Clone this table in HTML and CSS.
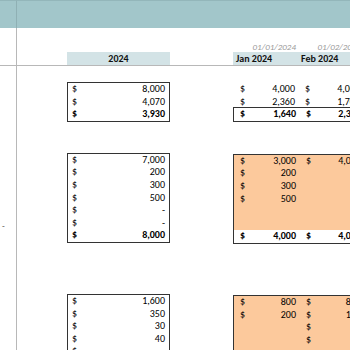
FILE: index.html
```html
<!DOCTYPE html>
<html>
<head>
<meta charset="utf-8">
<link rel="stylesheet" href="styles.css">
</head>
<body>
<div class="sheet">
  <div class="gutter">
    <div class="g-band"></div>
    <div class="g-head"></div>
    <div class="g-body"><span class="dash">-</span></div>
  </div>
  <div class="main">
    <div class="band"></div>
    <div class="head">
      <div class="cols dates">
        <div class="c4 date">01/01/2024</div>
        <div class="c5 date">01/02/2024</div>
      </div>
      <div class="cols titles">
        <div class="c2 title center">2024</div>
        <div class="c4 title">Jan 2024</div>
        <div class="c5 title">Feb 2024</div>
      </div>
    </div>

    <div class="cols block b1">
      <div class="c2 box">
        <div class="row"><span>$</span><span>8,000</span></div>
        <div class="row"><span>$</span><span>4,070</span></div>
        <div class="row bold"><span>$</span><span>3,930</span></div>
      </div>
      <div class="c45 months">
        <div class="mrow"><div class="row m"><span>$</span><span>4,000</span></div><div class="row m"><span>$</span><span>4,000</span></div></div>
        <div class="mrow"><div class="row m"><span>$</span><span>2,360</span></div><div class="row m"><span>$</span><span>1,700</span></div></div>
        <div class="mrow framed bold"><div class="row m"><span>$</span><span>1,640</span></div><div class="row m"><span>$</span><span>2,300</span></div></div>
      </div>
    </div>

    <div class="cols block b2">
      <div class="c2 box">
        <div class="row"><span>$</span><span>7,000</span></div>
        <div class="row"><span>$</span><span>200</span></div>
        <div class="row"><span>$</span><span>300</span></div>
        <div class="row"><span>$</span><span>500</span></div>
        <div class="row"><span>$</span><span class="nil">-</span></div>
        <div class="row"><span>$</span><span class="nil">-</span></div>
        <div class="row bold"><span>$</span><span>8,000</span></div>
      </div>
      <div class="c45 months orange">
        <div class="mrow"><div class="row m"><span>$</span><span>3,000</span></div><div class="row m"><span>$</span><span>4,000</span></div></div>
        <div class="mrow"><div class="row m"><span>$</span><span>200</span></div><div class="row m"></div></div>
        <div class="mrow"><div class="row m"><span>$</span><span>300</span></div><div class="row m"></div></div>
        <div class="mrow"><div class="row m"><span>$</span><span>500</span></div><div class="row m"></div></div>
        <div class="mrow"><div class="row m"></div><div class="row m"></div></div>
        <div class="mrow"><div class="row m"></div><div class="row m"></div></div>
        <div class="mrow total bold"><div class="row m"><span>$</span><span>4,000</span></div><div class="row m"><span>$</span><span>4,000</span></div></div>
      </div>
    </div>

    <div class="cols block b3">
      <div class="c2 box">
        <div class="row"><span>$</span><span>1,600</span></div>
        <div class="row"><span>$</span><span>350</span></div>
        <div class="row"><span>$</span><span>30</span></div>
        <div class="row"><span>$</span><span>40</span></div>
        <div class="row"><span>$</span><span>-</span></div>
      </div>
      <div class="c45 months orange">
        <div class="mrow"><div class="row m"><span>$</span><span>800</span></div><div class="row m"><span>$</span><span>800</span></div></div>
        <div class="mrow"><div class="row m"><span>$</span><span>200</span></div><div class="row m"><span>$</span><span>150</span></div></div>
        <div class="mrow"><div class="row m"></div><div class="row m"><span>$</span><span>30</span></div></div>
        <div class="mrow"><div class="row m"></div><div class="row m"><span>$</span><span>40</span></div></div>
        <div class="mrow"><div class="row m"></div><div class="row m"></div></div>
      </div>
    </div>
  </div>
</div>
</body>
</html>
```

FILE: styles.css
```css
html, body {
  margin: 0;
  padding: 0;
  background: #ffffff;
}
body {
  width: 350px;
  height: 350px;
  overflow: hidden;
  font-family: "Carlito", "Lato", "Liberation Sans", sans-serif;
  font-size: 10px;
  color: #000000;
}
.sheet {
  display: flex;
  width: 350px;
  height: 350px;
}
.gutter {
  width: 16px;
  flex: none;
  display: flex;
  flex-direction: column;
  border-right: 1px solid #b8b8b8;
}
.g-band {
  height: 27px;
  border-top: 1px solid #93b6ba;
  background: #a2c6ca;
  margin-right: -1px;
  border-right: 1px solid #8fb0b4;
}
.g-head {
  height: 37px;
  border-bottom: 1px solid #b8b8b8;
}
.g-body {
  padding-top: 153px;
  padding-left: 2px;
}
.dash {
  font-size: 9px;
  color: #444;
}
.main {
  flex: 1;
  min-width: 0;
  overflow: hidden;
}
.band {
  height: 27px;
  border-top: 1px solid #93b6ba;
  background: #a2c6ca;
}
.head {
  height: 37px;
  border-bottom: 1px solid #b8b8b8;
  display: flex;
  flex-direction: column;
  justify-content: flex-end;
}
.cols {
  display: grid;
  grid-template-columns: 50px 103px 63px 65px 65px;
}
.c2 { grid-column: 2; }
.c4 { grid-column: 4; }
.c5 { grid-column: 5; }
.c45 { grid-column: 4 / span 2; }
.dates {
  height: 11px;
  line-height: 11px;
}
.date {
  font-size: 9px;
  font-style: italic;
  color: #999999;
  text-align: right;
  padding-right: 2px;
  white-space: nowrap;
}
.titles {
  height: 13px;
}
.title {
  background: #d3e3e6;
  font-weight: bold;
  line-height: 13px;
  padding-left: 3px;
  white-space: nowrap;
  color: #111111;
}
.title.center {
  text-align: center;
  padding-left: 0;
}
.block {
  align-items: start;
}
.b1 { margin-top: 16px; }
.b2 { margin-top: 31px; }
.b3 { margin-top: 50px; }
.box {
  border: 1px solid #333;
}
.row {
  display: flex;
  justify-content: space-between;
  height: 12.6px;
  line-height: 12.6px;
  padding: 0 4px 0 4px;
  white-space: nowrap;
}
.bold { font-weight: bold; }
.months {
  display: flex;
  flex-direction: column;
}
.b1 .months { padding-top: 1px; }
.mrow {
  display: grid;
  grid-template-columns: 65px 65px;
}
.row.m {
  padding: 0 3px 0 7px;
}
.framed {
  border: 1px solid #333;
  border-right: none;
  margin-top: -1px;
}
.framed .row.m:first-child { padding-left: 6px; }
.orange {
  background: #fcc99c;
  border: 1px solid #333;
  border-right: none;
  margin-top: 1px;
}
.orange .row.m:first-child { padding-left: 6px; }
.total {
  background: #ffffff;
}
```
